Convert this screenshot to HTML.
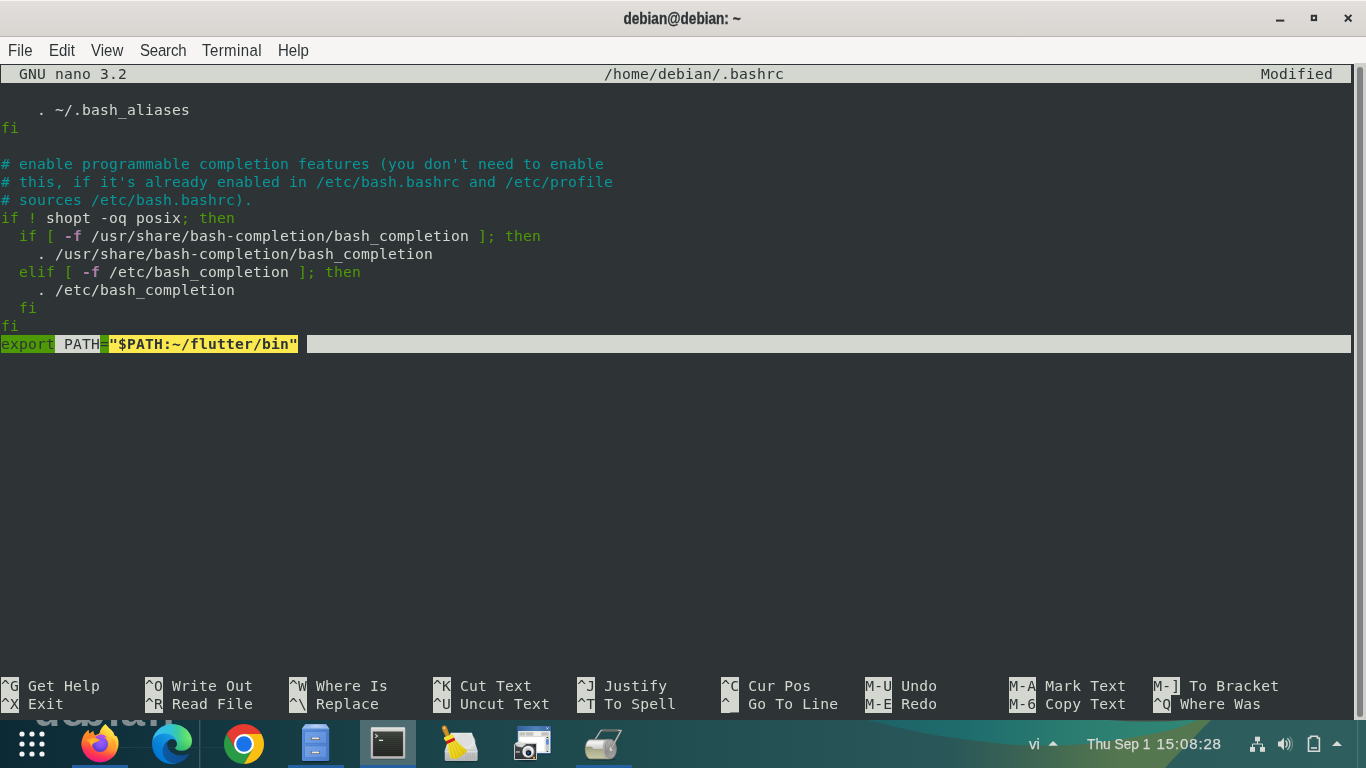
<!DOCTYPE html>
<html lang="en">
<head>
<meta charset="utf-8">
<title>debian@debian: ~</title>
<style>
html,body{margin:0;padding:0;}
body{width:1366px;height:768px;overflow:hidden;position:relative;background:#1d474d;font-family:"Liberation Sans","DejaVu Sans",sans-serif;}
#titlebar{position:absolute;left:0;top:0;width:1366px;height:36px;background:linear-gradient(#e2dfdc,#d9d5d1);border-bottom:1px solid #bdb6af;box-shadow:inset 0 1px 0 #f7f6f5;}
#title{position:absolute;left:-1.400px;width:1366px;top:8.500px;text-align:center;font-weight:bold;font-size:15.7px;line-height:20px;color:#2e3436;transform:scaleX(0.867);transform-origin:683px 0;-webkit-text-stroke:0.3px #2e3436;}
#menubar{position:absolute;left:0;top:37px;width:1366px;height:27px;background:#f6f5f4;}
#menubar span{position:absolute;top:4px;font-size:15px;line-height:20px;color:#2e3436;transform:scaleY(1.070);transform-origin:0 14.900px;}
#term{position:absolute;left:0;top:64px;width:1354px;height:656px;background:#2e3436;overflow:hidden;}
.r{position:absolute;left:1px;height:18px;line-height:18px;white-space:pre;font-family:"DejaVu Sans Mono","Liberation Mono",monospace;font-size:14.667px;letter-spacing:0.1765px;color:#d3d7cf;}
.r span{display:inline-block;height:18px;}
.rv{background:#d3d7cf;color:#2e3436;}
.g{color:#4e9a06;}
.c{color:#06989a;}
.m{color:#ad7fa8;font-weight:bold;}
.sg{background:#4e9a06;color:#2e3436;}
.sy{background:#fce94f;color:#2e3436;font-weight:bold;}
#sb{position:absolute;left:1354px;top:63px;width:12px;height:657px;background:#cfcfcc;box-shadow:inset 1px 0 0 #dadad8;}
#sb i{position:absolute;left:3px;top:4px;width:6px;height:650px;border-radius:3px;background:#7e8283;}
#panel{position:absolute;left:0;top:720px;width:1366px;height:48px;overflow:hidden;}
#titlebar,#menubar,#term,#panel,#sb{will-change:transform;}
.tile{position:absolute;top:0;width:56px;height:48px;background:#4e6c71;}
.ind{position:absolute;top:45px;width:56px;height:3px;background:#24609f;}
#wm{position:absolute;left:33.400px;top:-30.800px;font-size:44px;line-height:44px;font-weight:bold;color:#828d91;letter-spacing:0.3px;}
.ic{position:absolute;}
.pt{position:absolute;top:14px;font-size:15px;line-height:20px;color:#d9d9d6;white-space:pre;-webkit-text-stroke:0.250px #d9d9d6;}
</style>
</head>
<body>
<div id="titlebar"><div id="title">debian@debian: ~</div>
<svg width="1366" height="36" style="position:absolute;left:0;top:0" fill="none" stroke="#2e3436" stroke-width="2">
<path d="M1276 20.600h8.300"/><rect x="1311.800" y="15.800" width="4.300" height="4.300"/><path d="M1344.900 14.900l6.600 6.600M1351.500 14.900l-6.600 6.600"/>
</svg>
</div>
<div id="menubar"><span style="left:8px;letter-spacing:0.18px">File</span><span style="left:49px">Edit</span><span style="left:91px">View</span><span style="left:140px;letter-spacing:-0.2px">Search</span><span style="left:202px;letter-spacing:0.4px">Terminal</span><span style="left:278px">Help</span></div>
<div id="term">
<div class="r" style="top:1px"><span class="rv">  GNU nano 3.2                                                     /home/debian/.bashrc                                                     Modified  </span></div>
<div class="r" style="top:37px">    . ~/.bash_aliases</div>
<div class="r" style="top:55px"><span class="g">fi</span></div>
<div class="r" style="top:91px"><span class="c"># enable programmable completion features (you don't need to enable</span></div>
<div class="r" style="top:109px"><span class="c"># this, if it's already enabled in /etc/bash.bashrc and /etc/profile</span></div>
<div class="r" style="top:127px"><span class="c"># sources /etc/bash.bashrc).</span></div>
<div class="r" style="top:145px"><span class="g">if !</span> shopt -oq posix<span class="g">; then</span></div>
<div class="r" style="top:163px">  <span class="g">if [</span> <span class="m">-f</span> /usr/share/bash-completion/bash_completion <span class="g">]; then</span></div>
<div class="r" style="top:181px">    . /usr/share/bash-completion/bash_completion</div>
<div class="r" style="top:199px">  <span class="g">elif [</span> <span class="m">-f</span> /etc/bash_completion <span class="g">]; then</span></div>
<div class="r" style="top:217px">    . /etc/bash_completion</div>
<div class="r" style="top:235px">  <span class="g">fi</span></div>
<div class="r" style="top:253px"><span class="g">fi</span></div>
<div class="r" style="top:271px"><span class="sg">export</span><span class="rv"> PATH</span><span class="sg">=</span><span class="sy">"$PATH:~/flutter/bin"</span> <span class="rv">                                                                                                                    </span></div>
<div class="r" style="top:613px"><span class="rv">^G</span> Get Help     <span class="rv">^O</span> Write Out    <span class="rv">^W</span> Where Is     <span class="rv">^K</span> Cut Text     <span class="rv">^J</span> Justify      <span class="rv">^C</span> Cur Pos      <span class="rv">M-U</span> Undo        <span class="rv">M-A</span> Mark Text   <span class="rv">M-]</span> To Bracket</div>
<div class="r" style="top:631px"><span class="rv">^X</span> Exit         <span class="rv">^R</span> Read File    <span class="rv">^\</span> Replace      <span class="rv">^U</span> Uncut Text   <span class="rv">^T</span> To Spell     <span class="rv">^_</span> Go To Line   <span class="rv">M-E</span> Redo        <span class="rv">M-6</span> Copy Text   <span class="rv">^Q</span> Where Was</div>
</div>
<div id="sb"><i></i></div>
<div id="panel">
<svg width="1366" height="48" viewBox="0 0 1366 48" style="position:absolute;left:0;top:0">
<defs>
<linearGradient id="bg" x1="0" x2="1366" y1="0" y2="0" gradientUnits="userSpaceOnUse">
<stop offset="0" stop-color="#0c2a36"/><stop offset="0.1" stop-color="#10323d"/><stop offset="0.22" stop-color="#163c44"/><stop offset="0.36" stop-color="#1c464c"/><stop offset="0.5" stop-color="#214e50"/><stop offset="0.68" stop-color="#295658"/><stop offset="0.85" stop-color="#2d5c5c"/><stop offset="1" stop-color="#2e5e5d"/>
</linearGradient>
<linearGradient id="teal" x1="867" x2="1200" y1="0" y2="0" gradientUnits="userSpaceOnUse">
<stop offset="0" stop-color="#1d6266"/><stop offset="0.3" stop-color="#1f6c6d"/><stop offset="0.6" stop-color="#2a7c70"/><stop offset="1" stop-color="#318874"/>
</linearGradient>
<linearGradient id="olive" x1="950" x2="1120" y1="0" y2="0" gradientUnits="userSpaceOnUse">
<stop offset="0" stop-color="#3f6651" stop-opacity="0"/><stop offset="0.450" stop-color="#426851" stop-opacity="0.750"/><stop offset="0.800" stop-color="#4c7050"/><stop offset="1" stop-color="#547750"/>
</linearGradient>
</defs>
<rect width="1366" height="48" fill="url(#bg)"/>
<path d="M940 48V14L1000 22L1100 21L1172 9.500L1198 0H1211C1209.300 1.700 1204.700 6.200 1201 10C1197.300 13.800 1193.200 18.700 1189 23C1184.800 27.300 1180 31.800 1176 36C1172 40.200 1166.800 46 1165 48Z" fill="url(#olive)"/>
<path d="M867 0C873.300 1.500 892.700 6.300 905 9C917.300 11.700 926 13.700 941 16C956 18.300 980.500 21.400 995 23C1009.500 24.600 1014.300 25.100 1028 25.300C1041.700 25.600 1059.800 25.800 1077 24.500C1094.200 23.200 1115.200 20.200 1131 17.700C1146.800 15.200 1160.800 12.400 1172 9.500C1183.200 6.600 1193.700 1.600 1198 0Z" fill="url(#teal)"/>
<rect x="199.300" y="0" width="1" height="48" fill="#4d6870"/>
<path d="M1108 0Q1148 3.200 1188 0Z" fill="#474b45"/>
<rect x="105" y="27" width="120" height="1" fill="#1f3e47"/>
<rect x="1357.200" y="0" width="1" height="48" fill="#4f7a78"/>
</svg>
<div id="wm">de<span style="margin-left:-6.600px">b</span><span style="margin-left:2px">i</span>a<span style="margin-left:2.300px">n</span></div>
<div class="tile" style="left:360px"></div>
<i class="ind" style="left:72px"></i><i class="ind" style="left:288px"></i><i class="ind" style="left:360px"></i><i class="ind" style="left:576px"></i>
<svg class="ic" style="left:16px;top:8px" width="32" height="32" viewBox="0 0 32 32" fill="#f2f2f2">
<circle cx="6" cy="6" r="2.600"/><circle cx="16" cy="6" r="2.600"/><circle cx="26" cy="6" r="2.600"/>
<circle cx="6" cy="16" r="2.600"/><circle cx="16" cy="16" r="2.600"/><circle cx="26" cy="16" r="2.600"/>
<circle cx="6" cy="26" r="2.600"/><circle cx="16" cy="26" r="2.600"/><circle cx="26" cy="26" r="2.600"/>
</svg>
<!-- chrome -->
<svg class="ic" style="left:224px;top:4px" width="40" height="40" viewBox="0 0 40 40">
<path d="M2.680 10A20 20 0 0 1 37.320 10L20 10L11.340 25Z" fill="#e53b30"/>
<path d="M2.680 10A20 20 0 0 0 20 40L28.660 25L11.340 25Z" fill="#2a9a46"/>
<path d="M37.320 10A20 20 0 0 1 20 40L28.660 25L20 10Z" fill="#fbbf12"/>
<circle cx="20" cy="20" r="10" fill="#fff"/><circle cx="20" cy="20" r="7.800" fill="#1a73e8"/>
</svg>
<!-- edge -->
<svg class="ic" style="left:152px;top:4px" width="40" height="40" viewBox="0 0 256 256">
<defs>
<linearGradient id="e1" x1="63" y1="177" x2="241" y2="177" gradientUnits="userSpaceOnUse"><stop offset="0" stop-color="#0c59a4"/><stop offset="1" stop-color="#114a8b"/></linearGradient>
<linearGradient id="e2" x1="157" y1="99" x2="46" y2="221" gradientUnits="userSpaceOnUse"><stop offset="0" stop-color="#1b9de2"/><stop offset="0.160" stop-color="#1595df"/><stop offset="0.670" stop-color="#0680d7"/><stop offset="1" stop-color="#0078d4"/></linearGradient>
<linearGradient id="e3" x1="20" y1="0" x2="250" y2="0" gradientUnits="userSpaceOnUse"><stop offset="0" stop-color="#36bcf3"/><stop offset="0.420" stop-color="#2fc3d8"/><stop offset="0.640" stop-color="#3ccb9e"/><stop offset="0.850" stop-color="#5fe072"/><stop offset="1" stop-color="#70ea72"/></linearGradient>
<linearGradient id="e4" x1="0" y1="95" x2="0" y2="172" gradientUnits="userSpaceOnUse"><stop offset="0" stop-color="#1fa85a" stop-opacity="0"/><stop offset="1" stop-color="#1fa85a" stop-opacity="0.600"/></linearGradient>
</defs>
<path fill="url(#e1)" d="M231 190.500c-3.400 1.800-6.900 3.400-10.500 4.700a101.600 101.600 0 0 1-35.700 6.400c-47 0-88-32.300-88-73.900a31.300 31.300 0 0 1 16.300-27.100c-42.600 1.800-53.500 46.200-53.500 72.200 0 73.600 67.700 81 82.300 81 7.900 0 19.800-2.300 26.900-4.600l1.300-.4a128.300 128.300 0 0 0 66.600-52.800 4 4 0 0 0-5.300-5.700z"/>
<path fill="url(#e2)" d="M105.700 241.400a79.300 79.300 0 0 1-22.700-21.400 80.700 80.700 0 0 1 29.500-120c3.100-1.500 8.500-4.100 15.600-4a32.400 32.400 0 0 1 25.700 13 31.900 31.900 0 0 1 6.300 18.700c0-.2 24.500-79.600-80-79.600-43.900 0-80 41.700-80 78.200a130.200 130.200 0 0 0 12.100 56 128 128 0 0 0 156.400 67.100 75.500 75.500 0 0 1-62.800-8z"/>
<path fill="url(#e3)" d="M152.300 148.900c-.8 1-3.300 2.500-3.300 5.600 0 2.600 1.700 5.100 4.700 7.200 14.300 10 41.300 8.600 41.400 8.600a59.600 59.600 0 0 0 30.200-8.300 61.400 61.400 0 0 0 30.400-52.900c.3-22.400-8-37.300-11.300-43.900C223.100 23.900 177.700 0 128.300 0A128 128 0 0 0 .3 126.200c.5-36.500 36.800-66 80-66 3.500 0 23.500.3 42 10.100 16.300 8.600 24.900 18.900 30.800 29.200 6.200 10.700 7.300 24.100 7.300 29.500s-2.700 13.300-8.100 19.900z"/>
<path fill="url(#e4)" d="M152.300 148.900c-.8 1-3.300 2.500-3.300 5.600 0 2.600 1.700 5.100 4.700 7.200 14.300 10 41.300 8.600 41.400 8.600a59.600 59.600 0 0 0 30.200-8.300 61.400 61.400 0 0 0 30.400-52.900c.3-22.400-8-37.300-11.300-43.900C223.100 23.900 177.700 0 128.300 0A128 128 0 0 0 .3 126.200c.5-36.500 36.800-66 80-66 3.500 0 23.500.3 42 10.100 16.300 8.600 24.900 18.900 30.800 29.200 6.200 10.700 7.300 24.100 7.300 29.500s-2.700 13.300-8.100 19.900z"/>
</svg>
<!-- firefox -->
<svg class="ic" style="left:76px;top:0" width="48" height="48" viewBox="0 0 48 48">
<defs>
<linearGradient id="f1" x1="38" y1="7" x2="13" y2="41" gradientUnits="userSpaceOnUse"><stop offset="0" stop-color="#fff35c"/><stop offset="0.220" stop-color="#ffd33a"/><stop offset="0.420" stop-color="#ff9d2e"/><stop offset="0.620" stop-color="#ff6338"/><stop offset="0.820" stop-color="#ff3650"/><stop offset="1" stop-color="#e5128f"/></linearGradient>
<linearGradient id="f1b" x1="24" y1="30" x2="24" y2="43" gradientUnits="userSpaceOnUse"><stop offset="0" stop-color="#ff3a4a" stop-opacity="0"/><stop offset="0.600" stop-color="#f8246c" stop-opacity="0.600"/><stop offset="1" stop-color="#e8109a" stop-opacity="1"/></linearGradient>
<radialGradient id="f2" cx="25" cy="22" r="10" gradientUnits="userSpaceOnUse"><stop offset="0" stop-color="#9a5cff"/><stop offset="0.500" stop-color="#8350f0"/><stop offset="1" stop-color="#5a38c8"/></radialGradient>
<linearGradient id="f3" x1="10" y1="17" x2="24" y2="24" gradientUnits="userSpaceOnUse"><stop offset="0" stop-color="#ff9a22"/><stop offset="0.500" stop-color="#ffb42e"/><stop offset="1" stop-color="#ff8c1e"/></linearGradient>
<linearGradient id="f4" x1="12" y1="9" x2="14" y2="30" gradientUnits="userSpaceOnUse"><stop offset="0" stop-color="#ff9c1c"/><stop offset="0.500" stop-color="#ff7a2c"/><stop offset="1" stop-color="#ff5a38" stop-opacity="0"/></linearGradient>
<linearGradient id="f5" x1="30" y1="14" x2="34" y2="36" gradientUnits="userSpaceOnUse"><stop offset="0" stop-color="#ffd640" stop-opacity="0"/><stop offset="0.400" stop-color="#ffa630"/><stop offset="1" stop-color="#ff7a38" stop-opacity="0"/></linearGradient>
</defs>
<path fill="url(#f1)" d="M29.400 4.100C30.600 5.200 31.500 6.300 32.500 7.500C34.300 9 36.200 10.600 37.500 12.500C37.700 13.600 38.300 14.700 38.900 15.700C39.400 15.800 40 16 40.600 16.300C41.700 18 42.300 19.900 42.500 21.900C42.700 24 42.500 26.100 41.900 28.100C41.300 30.600 40.300 32.900 38.800 35C37.100 37.100 35 38.800 32.500 40C30 41.300 27.300 42.100 24.400 42.200C21.200 42.200 18.300 41.500 15.600 40C13 38.800 10.900 37.100 9.400 35C7.700 32.900 6.500 30.600 5.900 28.100C5.500 26.400 5.400 24.800 5.500 23.100C5.700 21.100 6.200 19.300 6.900 17.500C7.500 15.900 8.400 14.400 9.400 13.100C10.200 11.900 11.300 10.900 12.500 10C12.600 11.400 12.900 12.700 13.400 14C14.500 12.900 15.800 12 17.200 11.300C17.500 12.800 18 14.300 18.800 15.600L23.400 13.400C24.200 10 26.300 6.600 29.400 4.100Z"/>
<path fill="url(#f4)" d="M12.500 10C12.600 11.400 12.900 12.700 13.400 14C14.500 12.900 15.800 12 17.200 11.300C17.500 12.800 18 14.300 18.800 15.600L22 20L17 30L6 28C5.500 26.400 5.400 24.800 5.500 23.100C5.700 21.100 6.200 19.300 6.900 17.500C7.500 15.900 8.400 14.400 9.400 13.100C10.200 11.900 11.300 10.900 12.500 10Z"/>
<path fill="url(#f1b)" d="M5.900 28.100C6.500 30.600 7.700 32.900 9.400 35C10.900 37.100 13 38.800 15.600 40C18.300 41.500 21.200 42.200 24.400 42.200C27.300 42.100 30 41.300 32.500 40C35 38.800 37.100 37.100 38.800 35C40.300 32.900 41.300 30.600 41.900 28.100C36 36 12 36 5.900 28.100Z"/>
<path fill="url(#f5)" d="M30 15.500C34 17 36.500 21 36.500 25.500C36.500 30 34 34 30 36.500C36 35 40 30 40 24C40 20 37 16.500 30 15.500Z"/>
<circle cx="24.100" cy="24.100" r="7.900" fill="url(#f2)"/>
<path fill="#b44ee6" d="M19 17.500C21 15 24.500 14 27.500 15C29.300 15.600 30.500 16.600 31.200 17.800C29.800 17.200 28.600 17.200 27.600 17.600C28.500 18.300 29.300 19.300 29.700 20.400C27 17.500 22.500 17 19 17.500Z"/>
<path fill="url(#f3)" d="M10.300 20.600C11.400 19.500 12.800 18.900 14.400 18.800C15.800 17.900 17.400 17.900 18.800 18.100C21 18.400 22.800 19.300 24.100 20.300C22.900 21.100 21.800 21.600 20.600 21.900C19.200 22.300 17.900 22.900 16.900 23.800C16.200 24.500 15.800 25.400 15.600 26.400C14.800 25 14.100 23.600 13.500 22.800C12.500 22 11.500 21.300 10.300 20.600Z"/>
</svg>
<!-- files -->
<svg class="ic" style="left:292px;top:0" width="48" height="48" viewBox="0 0 48 48">
<defs>
<linearGradient id="c1" x1="0" y1="4" x2="0" y2="8.500" gradientUnits="userSpaceOnUse"><stop offset="0" stop-color="#7fa9e6"/><stop offset="1" stop-color="#a3c3f0"/></linearGradient>
<linearGradient id="c2" x1="10" y1="0" x2="37" y2="0" gradientUnits="userSpaceOnUse"><stop offset="0" stop-color="#5a8dd9"/><stop offset="0.500" stop-color="#5487d5"/><stop offset="1" stop-color="#4a7ccc"/></linearGradient>
<linearGradient id="c3" x1="13" y1="11" x2="34" y2="24" gradientUnits="userSpaceOnUse"><stop offset="0" stop-color="#74a2e6"/><stop offset="1" stop-color="#5e90dc"/></linearGradient>
<linearGradient id="c4" x1="13" y1="26" x2="34" y2="38" gradientUnits="userSpaceOnUse"><stop offset="0" stop-color="#74a2e6"/><stop offset="1" stop-color="#5e90dc"/></linearGradient>
<radialGradient id="c5" cx="24" cy="6" r="9" gradientUnits="userSpaceOnUse" gradientTransform="translate(0 4.500) scale(1 0.250)"><stop offset="0" stop-color="#c4daf6"/><stop offset="1" stop-color="#c4daf6" stop-opacity="0"/></radialGradient>
</defs>
<ellipse cx="23.600" cy="41" rx="14.500" ry="1.600" fill="#06161c" opacity="0.550"/>
<rect x="10" y="8.200" width="27.200" height="32.700" rx="0.800" fill="url(#c2)"/>
<path d="M13.400 4.100H34L37.200 8.500H10Z" fill="url(#c1)"/>
<path d="M13.400 4.100H34L37.200 8.500H10Z" fill="url(#c5)"/>
<rect x="10" y="8.200" width="27.200" height="1" fill="#86afe9"/>
<rect x="12.600" y="11.400" width="21.900" height="11.900" fill="#4478c8"/>
<rect x="13" y="11.800" width="21.100" height="11.100" fill="url(#c3)"/>
<rect x="12.600" y="25.800" width="21.900" height="11.900" fill="#4478c8"/>
<rect x="13" y="26.200" width="21.100" height="11.100" fill="url(#c4)"/>
<path d="M19.600 17.200V19.200H27.400V17.200" fill="none" stroke="#5f5d55" stroke-width="1.400" stroke-linejoin="round"/>
<rect x="19.700" y="17.700" width="7.600" height="1.500" fill="#e9e9e4"/>
<path d="M19.600 31.300V33.300H27.400V31.300" fill="none" stroke="#5f5d55" stroke-width="1.400" stroke-linejoin="round"/>
<rect x="19.700" y="31.800" width="7.600" height="1.500" fill="#e9e9e4"/>
</svg>
<!-- terminal -->
<svg class="ic" style="left:364px;top:0" width="48" height="48" viewBox="0 0 48 48">
<defs>
<linearGradient id="t1" x1="0" y1="7.500" x2="0" y2="39" gradientUnits="userSpaceOnUse"><stop offset="0" stop-color="#dedcda"/><stop offset="0.150" stop-color="#cfcdcb"/><stop offset="1" stop-color="#bab8b6"/></linearGradient>
<linearGradient id="t2" x1="0" y1="11.700" x2="0" y2="36" gradientUnits="userSpaceOnUse"><stop offset="0" stop-color="#454943"/><stop offset="0.350" stop-color="#363a35"/><stop offset="1" stop-color="#282b28"/></linearGradient>
<pattern id="t3" width="2" height="2" patternUnits="userSpaceOnUse"><rect width="2" height="1" fill="#000" opacity="0.120"/></pattern>
</defs>
<rect x="7.200" y="8.600" width="33.800" height="31.200" rx="1.200" fill="#1c3036" opacity="0.450"/>
<rect x="6.800" y="7.500" width="34.400" height="31.300" rx="1.400" fill="url(#t1)"/>
<rect x="6.800" y="7.500" width="34.400" height="1" rx="0.500" fill="#ecebea"/>
<rect x="8.800" y="11.400" width="30.400" height="25" fill="#8d8d8a"/>
<rect x="9.100" y="11.700" width="29.800" height="24.400" fill="url(#t2)"/>
<rect x="9.100" y="11.700" width="29.800" height="24.400" fill="url(#t3)"/>
<path d="M11.200 14.200L13.600 16L11.200 17.800" fill="none" stroke="#c4c6c0" stroke-width="1.200"/>
<rect x="14.900" y="19.700" width="4.200" height="1.300" fill="#e0e2dc"/>
</svg>
<!-- bleachbit -->
<svg class="ic" style="left:436px;top:0" width="48" height="48" viewBox="0 0 48 48">
<defs>
<linearGradient id="b1" x1="0" y1="12.800" x2="0" y2="30.600" gradientUnits="userSpaceOnUse"><stop offset="0" stop-color="#e9e9e9"/><stop offset="1" stop-color="#d2d2d2"/></linearGradient>
<linearGradient id="b2" x1="0" y1="30.600" x2="0" y2="41" gradientUnits="userSpaceOnUse"><stop offset="0" stop-color="#dcdcdc"/><stop offset="0.250" stop-color="#c6c6c6"/><stop offset="1" stop-color="#b4b4b4"/></linearGradient>
<linearGradient id="b3" x1="14" y1="22" x2="30" y2="36" gradientUnits="userSpaceOnUse"><stop offset="0" stop-color="#f7e23a"/><stop offset="0.600" stop-color="#ecd21c"/><stop offset="1" stop-color="#d8bc10"/></linearGradient>
<linearGradient id="b4" x1="6" y1="10" x2="12" y2="8" gradientUnits="userSpaceOnUse"><stop offset="0" stop-color="#b87414"/><stop offset="0.500" stop-color="#d4952c"/><stop offset="1" stop-color="#b87414"/></linearGradient>
</defs>
<ellipse cx="25" cy="41.200" rx="17" ry="1.300" fill="#06161c" opacity="0.400"/>
<path d="M14.700 12.800H35.900L41.600 30.600H8.750Z" fill="url(#b1)"/>
<ellipse cx="30.500" cy="21.500" rx="9" ry="7.500" fill="#efefef" opacity="0.550"/>
<ellipse cx="29" cy="20" rx="8" ry="6.500" fill="#dedede"/>
<path d="M8.750 30.600H41.600V39.400Q41.600 41 40 41H10.350Q8.750 41 8.750 39.400Z" fill="url(#b2)"/>
<rect x="8.750" y="30.600" width="32.850" height="0.800" fill="#ececec"/>
<path d="M30 33v6M32.200 33v6M34.400 33v6M36.600 33v6M38.500 33v6" stroke="#b0b0b0" stroke-width="0.900"/>
<path d="M14.400 37.700C13 33 11.500 27 11 21.500L18.300 18.300C22 22.500 27 27 31.250 30.600C30 32.500 28.300 34.200 26.250 35.600C24 37.300 21.500 38.500 18.750 39C17 38.900 15.500 38.400 14.400 37.700Z" fill="url(#b3)"/>
<path d="M13.500 24L16.800 38.300M15.500 23L20.500 38M17.500 22L24.300 36.500M19 21L27.800 34" stroke="#c9ae12" stroke-width="0.700" fill="none" opacity="0.800"/>
<path d="M5.900 9.300C5.200 7.600 6.200 5.900 7.800 5.600C9.300 5.300 10.600 6.200 11 7.600L13.800 15.300L9.900 17Z" fill="url(#b4)"/>
<circle cx="8.200" cy="8.100" r="0.800" fill="#fff6e0"/>
<path d="M8 19C7.600 18 8.200 17.200 9.200 16.800L15.200 14.300C16.200 13.900 17 14.300 17.300 15.100L18.300 17.600L10 21.600Z" fill="#f3de34"/>
<path d="M9.900 21.300L18.300 17.600L19 19.600C19.200 20.200 19 20.600 18.500 20.800L11.800 23.800C11.200 24 10.800 23.800 10.600 23.300Z" fill="#d21a1a"/>
</svg>
<!-- screenshot -->
<svg class="ic" style="left:508px;top:0" width="48" height="48" viewBox="0 0 48 48">
<defs>
<linearGradient id="s1" x1="9.400" y1="0" x2="43" y2="0" gradientUnits="userSpaceOnUse"><stop offset="0" stop-color="#335f97"/><stop offset="0.550" stop-color="#5182ba"/><stop offset="1" stop-color="#38659f"/></linearGradient>
<radialGradient id="s2" cx="19.800" cy="31.200" r="6.100" gradientUnits="userSpaceOnUse"><stop offset="0" stop-color="#a0a0a0"/><stop offset="0.450" stop-color="#d0d0d0"/><stop offset="0.800" stop-color="#f6f6f6"/><stop offset="1" stop-color="#a8a8a8"/></radialGradient>
<linearGradient id="s3" x1="0" y1="22" x2="0" y2="40" gradientUnits="userSpaceOnUse"><stop offset="0" stop-color="#4a4e50"/><stop offset="1" stop-color="#2c3032"/></linearGradient>
</defs>
<rect x="10" y="6.600" width="33.600" height="27.800" rx="1" fill="#0a1c22" opacity="0.350"/>
<rect x="9.400" y="5.900" width="33.700" height="27.900" rx="1" fill="#3f6eb0"/>
<rect x="10" y="6.400" width="32.500" height="4.400" fill="url(#s1)"/>
<rect x="10.200" y="11" width="32.100" height="22" fill="#e9e9e5"/>
<path d="M38.400 7.400l2 2M40.400 7.400l-2 2" stroke="#d8e2ee" stroke-width="0.900"/>
<rect x="11.500" y="12.300" width="5.400" height="3.300" fill="#bfc1bd"/><rect x="17.800" y="12.300" width="7.500" height="3.300" fill="#bfc1bd"/><rect x="26" y="12.300" width="6.800" height="3.300" fill="#f1f1ee"/><rect x="33.500" y="12.300" width="7.200" height="3.300" fill="#bfc1bd"/>
<rect x="10.200" y="16.200" width="32.100" height="0.500" fill="#cfcfca"/>
<rect x="11.600" y="17.200" width="24.700" height="14.100" fill="#fff"/>
<rect x="37.800" y="17" width="3.200" height="15" fill="#c9c9c5"/>
<path d="M38.500 17.900L39.400 16.700L40.300 17.900ZM38.500 30.900L39.400 32.100L40.300 30.900Z" fill="#111"/>
<rect x="38" y="19" width="2.800" height="5.800" rx="1.400" fill="#5b8bda"/>
<ellipse cx="19" cy="40.600" rx="9" ry="1.400" fill="#06161c" opacity="0.450"/>
<path d="M6.500 24.200L8 22.400L12 21.800L14.500 22.800H28Q29 22.800 29 23.800V39Q29 40 28 40H7Q6 40 6 39V25Z" fill="#c9c9c9"/>
<rect x="7" y="24" width="21" height="15" fill="url(#s3)"/>
<path d="M7 24L9 22.600L12.500 22.300L14 24Z" fill="#e4e4e4"/>
<rect x="11.500" y="24.600" width="3.400" height="1.800" fill="#d9d9d9"/>
<rect x="7.800" y="31.200" width="4" height="1.500" fill="#b6b6b6"/>
<rect x="25.600" y="24.600" width="2" height="2.200" fill="#1a1c1d"/>
<path d="M7 24.500L10 22.200L15.500 23L18 24.600L14 27.500L9 26.500Z" fill="#dcdcdc" opacity="0.900"/>
<circle cx="20.400" cy="31.900" r="6.100" fill="url(#s2)"/>
<circle cx="20.600" cy="33" r="2.700" fill="#17191b"/>
<rect x="19.200" y="31.800" width="2.100" height="2.200" fill="#1d4fb8"/>
<rect x="25" y="36.700" width="2" height="2" fill="#f0a020"/>
</svg>
<!-- roller -->
<svg class="ic" style="left:580px;top:0" width="48" height="48" viewBox="0 0 48 48">
<defs>
<linearGradient id="r1" x1="0" y1="19.400" x2="0" y2="39" gradientUnits="userSpaceOnUse"><stop offset="0" stop-color="#bdbdbb"/><stop offset="0.140" stop-color="#f6f6f5"/><stop offset="0.350" stop-color="#d9d9d7"/><stop offset="0.600" stop-color="#c2c2bf"/><stop offset="1" stop-color="#a2a29c"/></linearGradient>
<linearGradient id="r2" x1="0" y1="27" x2="0" y2="39" gradientUnits="userSpaceOnUse"><stop offset="0" stop-color="#9c9d7a"/><stop offset="0.450" stop-color="#b4b592"/><stop offset="1" stop-color="#c6c7a6"/></linearGradient>
<linearGradient id="r3" x1="25" y1="20" x2="36" y2="38" gradientUnits="userSpaceOnUse"><stop offset="0" stop-color="#b9b9b9"/><stop offset="0.500" stop-color="#8e8e8e"/><stop offset="1" stop-color="#a8a8a6"/></linearGradient>
</defs>
<ellipse cx="21" cy="39.200" rx="15" ry="1.500" fill="#06161c" opacity="0.350"/>
<path d="M15.300 19.200L21 10.400H41.200L31.300 28.500" fill="none" stroke="#72726c" stroke-width="1.700" stroke-linejoin="round"/>
<path d="M15.300 19.200L21 10.400H41.200L31.300 28.500" fill="none" stroke="#dcdcda" stroke-width="0.800" stroke-linejoin="round"/>
<path d="M23.200 10.400H36.800" stroke="#6c6c66" stroke-width="2" stroke-linecap="round"/>
<path d="M10.500 19.400H30.600C33.700 19.400 36.250 23.700 36.250 29S33.700 38.800 30.600 38.800H10.500C7.600 38.800 5.300 34.500 5.300 29S7.600 19.400 10.500 19.400Z" fill="url(#r1)" stroke="#7c7c74" stroke-width="0.700"/>
<path d="M5.500 27H11.500L13.500 29.400H22.500C24.500 29.400 25 33 27.500 37.500L29.500 38.800H10.500C8 38.800 5.800 35.500 5.400 30Z" fill="url(#r2)" stroke="#8a8a74" stroke-width="0.500"/>
<path d="M26.300 19.600C23.300 20.500 22.600 25 22.600 29.100S23.800 37.500 26.300 38.700H30.600V19.500Z" fill="#a9a9a6" opacity="0.850"/>
<ellipse cx="30.600" cy="29.100" rx="5.600" ry="9.500" fill="url(#r3)" stroke="#7c7c78" stroke-width="0.600"/>
<ellipse cx="30.900" cy="29" rx="1.800" ry="2.700" fill="#d4d4d2" stroke="#86867f" stroke-width="0.500"/>
<path d="M41.200 10.400L31.300 28.500" stroke="#72726c" stroke-width="1.700"/>
<path d="M41.200 10.400L31.300 28.500" stroke="#e2e2e0" stroke-width="0.800"/>
</svg>
<span class="pt" id="kb" style="left:1029px">vi</span>
<span class="pt" id="clk" style="left:1087.200px;transform:scaleX(0.917);transform-origin:0 0">Thu Sep 1</span>
<span class="pt" id="clk2" style="left:1156.600px;letter-spacing:0.85px">15:08:28</span>
<svg class="ic" style="left:1040px;top:12px" width="326" height="24" viewBox="1040 12 326 24" fill="#d9d9d6">
<path d="M1048.300 25.800L1053.150 20.900L1058 25.800Z"/>
<path d="M1332 26L1337 21L1342 26Z"/>
<!-- network -->
<rect x="1255" y="16.700" width="5" height="4.600"/><rect x="1250" y="27" width="5" height="4.800"/><rect x="1260" y="27" width="5" height="4.800"/>
<path d="M1257.500 21v3M1252.500 27.500v-3.500h10v3.500" fill="none" stroke="#d9d9d6" stroke-width="1"/>
<!-- volume -->
<path d="M1278 21.500H1280.500L1284 17.800V30.200L1280.500 26.500H1278Z"/>
<path d="M1285.600 20.600A4.600 4.600 0 0 1 1285.600 27.400" fill="none" stroke="#d9d9d6" stroke-width="1.500"/>
<path d="M1287.400 18.300A7.600 7.600 0 0 1 1287.400 29.700" fill="none" stroke="#d9d9d6" stroke-width="1.400" opacity="0.850"/>
<path d="M1289.500 16.600A10.400 10.400 0 0 1 1289.500 31.400" fill="none" stroke="#d9d9d6" stroke-width="1.200" opacity="0.350"/>
<!-- battery -->
<path d="M1310.600 16.300H1317.400V18H1319.400V31.200H1308.500V18H1310.600Z" fill="none" stroke="#d9d9d6" stroke-width="1.600"/>
<rect x="1311" y="27.200" width="6" height="1.600"/>
</svg>

</div>
</body>
</html>
